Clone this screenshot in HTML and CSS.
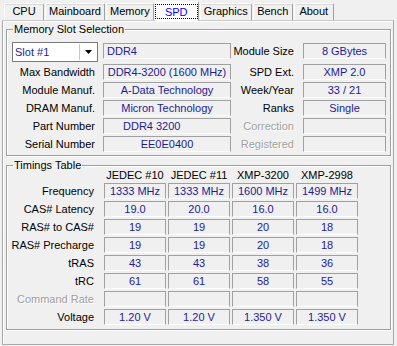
FILE: index.html
```html
<!DOCTYPE html>
<html lang="en">
<head>
  <meta charset="UTF-8" />
  <title>CPU-Z SPD</title>
  <link rel="stylesheet" href="styles.css">
</head>
<body>
  <div class="window">
    <div class="tabs">
      <div class="tab">CPU</div>
      <div class="tab">Mainboard</div>
      <div class="tab">Memory</div>
      <div class="tab tab-active"><span class="focus">SPD</span></div>
      <div class="tab">Graphics</div>
      <div class="tab">Bench</div>
      <div class="tab">About</div>
    </div>

    <div class="panel">
      <fieldset class="group slot-group">
        <legend>Memory Slot Selection</legend>
        <div class="slot-grid">
          <div class="combo">
            <span class="combo-text">Slot #1</span>
            <span class="combo-btn">
              <svg width="7" height="4" viewBox="0 0 7 4"><path d="M0 0h7L3.5 4z" fill="#000"/></svg>
            </span>
          </div>
          <div class="field field-left first">DDR4</div>
          <div class="label first">Module Size</div>
          <div class="field first">8 GBytes</div>

          <div class="label">Max Bandwidth</div>
          <div class="field">DDR4-3200 (1600 MHz)</div>
          <div class="label">SPD Ext.</div>
          <div class="field">XMP 2.0</div>

          <div class="label">Module Manuf.</div>
          <div class="field">A-Data Technology</div>
          <div class="label">Week/Year</div>
          <div class="field">33 / 21</div>

          <div class="label">DRAM Manuf.</div>
          <div class="field">Micron Technology</div>
          <div class="label">Ranks</div>
          <div class="field">Single</div>

          <div class="label">Part Number</div>
          <div class="field field-indent">DDR4 3200</div>
          <div class="label disabled">Correction</div>
          <div class="field"></div>

          <div class="label">Serial Number</div>
          <div class="field">EE0E0400</div>
          <div class="label disabled">Registered</div>
          <div class="field"></div>
        </div>
      </fieldset>

      <fieldset class="group timings-group">
        <legend>Timings Table</legend>
        <div class="timings-grid">
          <div></div>
          <div class="head">JEDEC #10</div>
          <div class="head">JEDEC #11</div>
          <div class="head">XMP-3200</div>
          <div class="head">XMP-2998</div>

          <div class="label">Frequency</div>
          <div class="field">1333 MHz</div>
          <div class="field">1333 MHz</div>
          <div class="field">1600 MHz</div>
          <div class="field">1499 MHz</div>

          <div class="label">CAS# Latency</div>
          <div class="field">19.0</div>
          <div class="field">20.0</div>
          <div class="field">16.0</div>
          <div class="field">16.0</div>

          <div class="label">RAS# to CAS#</div>
          <div class="field">19</div>
          <div class="field">19</div>
          <div class="field">20</div>
          <div class="field">18</div>

          <div class="label">RAS# Precharge</div>
          <div class="field">19</div>
          <div class="field">19</div>
          <div class="field">20</div>
          <div class="field">18</div>

          <div class="label">tRAS</div>
          <div class="field">43</div>
          <div class="field">43</div>
          <div class="field">38</div>
          <div class="field">36</div>

          <div class="label">tRC</div>
          <div class="field">61</div>
          <div class="field">61</div>
          <div class="field">58</div>
          <div class="field">55</div>

          <div class="label disabled">Command Rate</div>
          <div class="field"></div>
          <div class="field"></div>
          <div class="field"></div>
          <div class="field"></div>

          <div class="label">Voltage</div>
          <div class="field">1.20 V</div>
          <div class="field">1.20 V</div>
          <div class="field">1.350 V</div>
          <div class="field">1.350 V</div>
        </div>
      </fieldset>
    </div>
  </div>
</body>
</html>
```

FILE: styles.css
```css
body {
  margin: 0;
  background-color: #f0f0f0;
  font-family: "Liberation Sans", Arial, sans-serif;
  font-size: 11px;
  color: #000;
}

.window {
  width: 397px;
  height: 346px;
}

/* tab strip */
.tabs {
  display: flex;
  align-items: flex-end;
  height: 20px;
  padding-left: 4px;
}

.tab {
  box-sizing: border-box;
  min-width: 40px;
  height: 17px;
  padding: 0 3px;
  margin-right: 1px;
  line-height: 15px;
  text-align: center;
  border-top: 1px solid #fff;
  border-left: 1px solid #fff;
  border-right: 1px solid #a0a0a0;
  border-radius: 2px 2px 0 0;
  box-shadow: inset 0 1px 0 #dadada;
}

.tab-active {
  position: relative;
  z-index: 1;
  min-width: 44px;
  height: 20px;
  margin-bottom: -1px;
  padding: 2px 0 1px 0;
  background-color: #fff;
  color: #0000ff;
  box-shadow: none;
}

.focus {
  display: block;
  height: 15px;
  line-height: 14px;
  border: 1px dotted #000;
  box-sizing: border-box;
  margin: 0 0 0 -1px;
}

/* main panel */
.panel {
  box-sizing: border-box;
  height: 325px;
  margin: 0 3px 0 2px;
  border: 1px solid #a9a9a9;
  border-top-color: #c8c8c8;
  box-shadow: inset 1px 1px 0 #fff;
}

.group {
  margin: 2px 2px 0 3px;
  padding: 0;
  border: 1px solid #a0a0a0;
  box-shadow: 1px 1px 0 #fff, inset 1px 1px 0 #fff;
}

.group legend {
  margin-left: 6px;
  padding: 0 1px;
  line-height: 12px;
}

.slot-group {
  padding: 7px 0 1px 0;
}

.timings-group {
  margin-top: 3px;
  padding: 0 0 2px 0;
}

.slot-grid {
  display: grid;
  grid-template-columns: 96px 128px 72px 83px;
  grid-template-rows: 22px repeat(5, 18px);
}

.timings-grid {
  display: grid;
  grid-template-columns: 95px repeat(4, 62px);
  grid-template-rows: 12px repeat(8, 18px);
  column-gap: 2px;
}

.label {
  height: 16px;
  line-height: 16px;
  text-align: right;
  padding-right: 8px;
  white-space: nowrap;
}

.slot-grid .label:nth-child(4n+3) {
  padding-right: 9px;
}

.disabled {
  color: #a0a0a0;
  text-shadow: 1px 1px 0 #fff;
}

.field {
  box-sizing: border-box;
  height: 16px;
  line-height: 14px;
  text-align: center;
  color: #1c1c96;
  white-space: nowrap;
  overflow: hidden;
  border: 1px solid #a0a0a0;
  border-bottom-color: #fff;
}

.field-left {
  text-align: left;
  padding-left: 3px;
}

.field-indent {
  text-align: left;
  padding-left: 19px;
}

.first {
  margin-top: 1px;
}

.head {
  line-height: 9px;
  text-align: center;
  white-space: nowrap;
}

/* slot combo box */
.combo {
  display: flex;
  box-sizing: border-box;
  width: 86px;
  height: 20px;
  margin-left: 5px;
  background-color: #fff;
  border: 1px solid #7a7a7a;
}

.combo-text {
  flex: 1;
  padding-left: 2px;
  line-height: 18px;
  color: #1c1c96;
}

.combo-btn {
  display: flex;
  align-items: center;
  justify-content: center;
  width: 16px;
  margin: 1px;
  border-left: 1px solid #c8c8c8;
}
```
